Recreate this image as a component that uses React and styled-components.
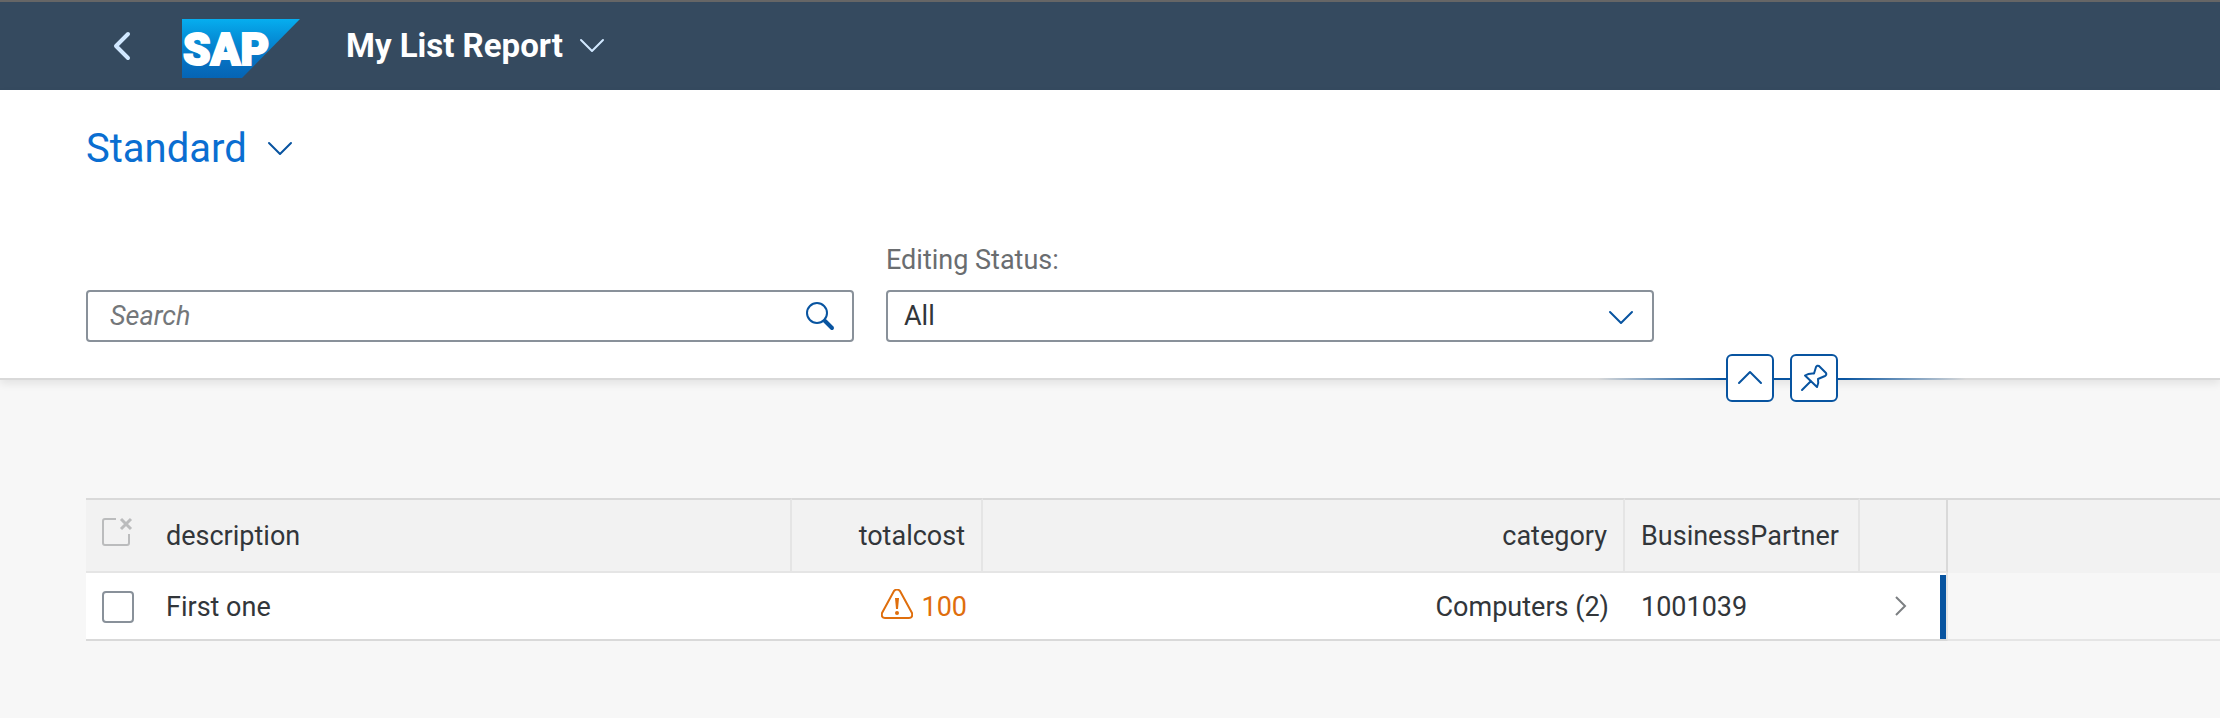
import React from "react";
import styled, { createGlobalStyle } from "styled-components";

const Global = createGlobalStyle`
  *, *::before, *::after { box-sizing: border-box; }
  body { margin: 0; background: #f7f7f7; color: #32363a; font: 27px/32px Roboto, "Liberation Sans", sans-serif; }
  button, input, select { font: inherit; color: inherit; }
  button { display: inline-flex; align-items: center; justify-content: center; padding: 0; border: 0; background: none; cursor: pointer; }
  svg { display: block; flex: none; }
`;

const ShellBar = styled.header`
  display: flex;
  align-items: center;
  height: 90px;
  padding: 0 86px;
  border-top: 2px solid #666;
  background: #354a5f;
  color: #fff;
`;

const BackButton = styled.button`
  width: 72px;
  height: 72px;
`;

const LogoLink = styled.a`
  margin: 4px 0 0 24px;
`;

const AppTitle = styled.button`
  gap: 16px;
  margin-left: 46px;
  font-size: 33px;
  font-weight: 700;
  line-height: 40px;
`;

const FilterBar = styled.section`
  position: relative;
  height: 290px;
  padding: 33px 86px 0;
  border-bottom: 2px solid #d9d9d9;
  background: #fff;
  box-shadow: 0 4px 8px rgba(0, 0, 0, 0.08);
`;

const VariantButton = styled.button`
  gap: 20px;
  color: #0a6ed1;
  font-size: 40px;
  line-height: 52px;
`;

const Fields = styled.div`
  display: flex;
  align-items: flex-end;
  gap: 32px;
  margin-top: 69px;
`;

const Field = styled.div`
  flex: 0 1 768px;
  min-width: 0;
`;

const Label = styled.label`
  display: block;
  margin-bottom: 14px;
  color: #6a6d70;
  line-height: 32px;
`;

const Box = styled.div`
  display: grid;
  height: 52px;
  border: 2px solid #89919a;
  border-radius: 4px;
  background: #fff;

  > * { grid-area: 1 / 1; }
`;

const SearchInput = styled.input`
  width: 100%;
  padding: 0 72px 0 22px;
  border: 0;
  background: none;

  &::placeholder { color: #74777a; font-style: italic; opacity: 1; }
`;

const SearchButton = styled.button`
  justify-self: end;
  width: 64px;
`;

const Select = styled.select`
  width: 100%;
  padding: 0 64px 0 16px;
  border: 0;
  appearance: none;
  background: none;
`;

const SelectArrow = styled.span`
  display: flex;
  align-items: center;
  justify-self: end;
  padding: 4px 18px 0 0;
  pointer-events: none;
`;

const EdgeControls = styled.div`
  position: absolute;
  right: 254px;
  bottom: -24px;
  display: flex;
  justify-content: center;
  gap: 16px;
  width: 368px;

  &::before {
    content: "";
    position: absolute;
    top: 24px;
    left: 0;
    right: 0;
    height: 2px;
    background: linear-gradient(to right, transparent, #0854a0 33%, #0854a0 67%, transparent);
  }
`;

const EdgeButton = styled.button`
  && {
    position: relative;
    width: 48px;
    height: 48px;
    border: 2px solid #0854a0;
    border-radius: 6px;
    background: #fff;
  }
`;

const Content = styled.main`
  padding: 118px 0 76px 86px;
`;

const Table = styled.table`
  width: 100%;
  border-collapse: separate;
  border-spacing: 0;
  table-layout: fixed;
`;

const Col = styled.col`
  width: ${(p) => p.$width || "auto"};
`;

const HeadCell = styled.th`
  height: 75px;
  padding: 0 16px;
  border: solid #e5e5e5;
  border-width: 2px ${(p) => (p.$plain ? "0" : "2px")} 2px 0;
  border-top-color: #d9d9d9;
  border-right-color: ${(p) => (p.$last ? "#d9d9d9" : "#e5e5e5")};
  border-bottom-color: ${(p) => (p.$fill ? "#f2f2f2" : "#e5e5e5")};
  background: #f2f2f2;
  font-weight: 400;
  text-align: ${(p) => p.$align || "left"};
`;

const Cell = styled.td`
  height: 68px;
  padding: 2px 16px 0;
  border-bottom: 2px solid #d9d9d9;
  background: #fff;
  text-align: ${(p) => p.$align || "left"};
`;

const NavCell = styled(Cell)`
  padding: 2px 0 0;
  border-right: 2px solid #e5e5e5;
`;

const NavContent = styled.div`
  display: flex;
  align-items: center;
  justify-content: flex-end;
  gap: 33px;
  height: 64px;

  > svg { margin-bottom: 2px; }

  &::after {
    content: "";
    width: 6px;
    height: 64px;
    background: #0854a0;
  }
`;

const FillCell = styled(Cell)`
  border-color: #e5e5e5;
  background: transparent;
`;

const Checkbox = styled.input`
  display: block;
  width: 32px;
  height: 32px;
  margin: 0;
  border: 2px solid #89919a;
  border-radius: 4px;
  appearance: none;
  background: #fff;

  &:checked { background: #0854a0; }
`;

const Warning = styled.span`
  display: flex;
  align-items: center;
  justify-content: flex-end;
  gap: 8px;
  color: #df6e0c;

  > svg { margin-bottom: 4px; }
`;

const Chevron = ({ color, width = 2, up }) => (
  <svg width="26" height="16" viewBox="0 0 26 16" fill="none" stroke={color} strokeWidth={width} strokeLinecap="round" strokeLinejoin="round">
    <path d={up ? "M2 13 13 2 24 13" : "M2 2 13 13 24 2"} />
  </svg>
);

const Logo = () => (
  <svg width="118" height="59" viewBox="0 0 118 59" role="img" aria-label="SAP">
    <defs>
      <linearGradient id="sap" x1="0" y1="0" x2="0" y2="1">
        <stop offset="0" stopColor="#06aeef" />
        <stop offset="0.3" stopColor="#0591d9" />
        <stop offset="0.7" stopColor="#0671c2" />
        <stop offset="1" stopColor="#0564b4" />
      </linearGradient>
    </defs>
    <path d="M0 0H118L60 59H0Z" fill="url(#sap)" />
    <text x="1" y="46" fill="#fff" stroke="#fff" strokeWidth="2" fontFamily="Roboto, sans-serif" fontWeight="900" fontSize="44">SAP</text>
  </svg>
);

export default function App() {
  return (
    <>
      <Global />
      <ShellBar>
        <BackButton aria-label="Back">
          <svg width="20" height="32" viewBox="0 0 20 32" fill="none" stroke="#d1e8ff" strokeWidth="4" strokeLinecap="round" strokeLinejoin="round">
            <path d="M16 4 4 16 16 28" />
          </svg>
        </BackButton>
        <LogoLink href="#"><Logo /></LogoLink>
        <AppTitle>My List Report <Chevron color="#d1e8ff" /></AppTitle>
      </ShellBar>

      <FilterBar>
        <VariantButton>Standard <Chevron color="#0854a0" /></VariantButton>
        <Fields>
          <Field>
            <Box>
              <SearchInput type="text" placeholder="Search" aria-label="Search" />
              <SearchButton aria-label="Run search">
                <svg width="30" height="30" viewBox="0 0 30 30" fill="none" stroke="#0854a0" strokeLinecap="round">
                  <circle cx="12" cy="12" r="10" strokeWidth="2" />
                  <path d="M20 20 27 27" strokeWidth="4" />
                </svg>
              </SearchButton>
            </Box>
          </Field>
          <Field>
            <Label htmlFor="status">Editing Status:</Label>
            <Box>
              <Select id="status"><option>All</option></Select>
              <SelectArrow><Chevron color="#0854a0" /></SelectArrow>
            </Box>
          </Field>
        </Fields>
        <EdgeControls>
          <EdgeButton aria-label="Collapse header"><Chevron color="#0854a0" up /></EdgeButton>
          <EdgeButton aria-label="Pin header">
            <svg width="28" height="28" viewBox="0 0 28 28" fill="none" stroke="#0854a0" strokeWidth="2" strokeLinecap="round" strokeLinejoin="round">
              <path d="M2 26 11 17M5 11.5 17 23Q19 19 18 15L25 12Q27 11 26 9L19 2Q17 1 16 3L14 9.500Q9 9 5 11.500Z" />
            </svg>
          </EdgeButton>
        </EdgeControls>
      </FilterBar>

      <Content>
        <Table>
          <colgroup>
            <Col $width="64px" />
            <Col />
            <Col $width="191px" />
            <Col />
            <Col $width="235px" />
            <Col $width="88px" />
            <Col $width="272px" />
          </colgroup>
          <thead>
            <tr>
              <HeadCell $plain>
                <svg width="32" height="48" viewBox="0 0 32 48" fill="none" stroke="#bbbcbd" strokeWidth="2" role="img" aria-label="Clear selection">
                  <path d="M14 7H3Q1 7 1 9V31Q1 33 3 33H25Q27 33 27 31V22" />
                  <path d="M19 7 29 17M29 7 19 17" strokeWidth="3" />
                </svg>
              </HeadCell>
              <HeadCell>description</HeadCell>
              <HeadCell $align="right">totalcost</HeadCell>
              <HeadCell $align="right">category</HeadCell>
              <HeadCell>BusinessPartner</HeadCell>
              <HeadCell $last />
              <HeadCell $plain $fill />
            </tr>
          </thead>
          <tbody>
            <tr>
              <Cell><Checkbox type="checkbox" aria-label="Select First one" /></Cell>
              <Cell>First one</Cell>
              <Cell>
                <Warning>
                  <svg width="32" height="32" viewBox="0 0 32 32" fill="none" stroke="currentColor" strokeWidth="2" strokeLinejoin="round" aria-hidden="true">
                    <path d="M13 2Q16-1 19 2L31 24Q32 29 28 29H4Q0 29 1 24Z" />
                    <path d="M14 9H18L17 20H15Z" fill="currentColor" stroke="none" />
                    <circle cx="16" cy="24" r="2" fill="currentColor" stroke="none" />
                  </svg>
                  100
                </Warning>
              </Cell>
              <Cell $align="right">Computers (2)</Cell>
              <Cell>1001039</Cell>
              <NavCell>
                <NavContent>
                  <svg width="12" height="20" viewBox="0 0 12 20" fill="none" stroke="#7c7f82" strokeWidth="2" aria-hidden="true">
                    <path d="M1 1 10 10 1 19" />
                  </svg>
                </NavContent>
              </NavCell>
              <FillCell />
            </tr>
          </tbody>
        </Table>
      </Content>
    </>
  );
}
